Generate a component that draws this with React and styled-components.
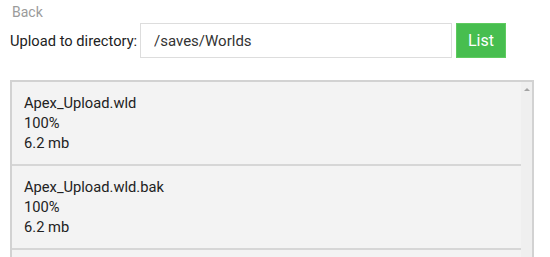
import styled, { createGlobalStyle } from 'styled-components';

const GlobalStyle = createGlobalStyle`
  html, body {
    margin: 0;
    background: #ffffff;
    overflow: hidden;
  }
  body {
    font-family: Roboto, "Liberation Sans", sans-serif;
    color: #222222;
  }
`;

const Page = styled.div`
  display: flex;
  flex-direction: column;
  padding: 2px 16px 0 10px;
`;

const BackLink = styled.a`
  font-size: 14px;
  line-height: 20px;
  color: #9b9b9b;
  padding-left: 2px;
  cursor: pointer;
`;

const UploadRow = styled.div`
  display: flex;
  align-items: center;
  gap: 4px;
  margin-top: 1px;
  height: 35px;
`;

const Label = styled.label`
  flex: none;
  width: 126px;
  white-space: nowrap;
  font-size: 14.7px;
  color: #222222;
`;

const PathInput = styled.input`
  box-sizing: border-box;
  width: 312px;
  height: 35px;
  border: 1px solid #dddddd;
  padding: 0 13px;
  font-family: inherit;
  font-size: 15px;
  color: #333333;
  outline: none;
`;

const ListButton = styled.button`
  box-sizing: border-box;
  width: 50px;
  height: 35px;
  border: 1px solid #5fcb5f;
  background: #47be4f;
  color: #ffffff;
  font-family: inherit;
  font-size: 16px;
  cursor: pointer;
`;

const FileBox = styled.div`
  display: flex;
  margin-top: 22px;
  height: 260px;
  border: 2px solid #d2d2d2;
  background: #f3f3f3;
`;

const FileList = styled.div`
  flex: 1;
  overflow: hidden;
`;

const FileItem = styled.div`
  padding: 11px 12px;
  border-bottom: 2px solid #d6d6d6;
  font-size: 14.7px;
  line-height: 20px;
  color: #222222;
`;

const ScrollTrack = styled.div`
  width: 11px;
  background: #efefef;
  display: flex;
  justify-content: center;
  padding-top: 6px;
`;

const ScrollArrow = styled.div`
  width: 0;
  height: 0;
  border-left: 3px solid transparent;
  border-right: 3px solid transparent;
  border-bottom: 3px solid #a3a3a3;
`;

const files = [
  { name: 'Apex_Upload.wld', progress: '100%', size: '6.2 mb' },
  { name: 'Apex_Upload.wld.bak', progress: '100%', size: '6.2 mb' },
];

export default function App() {
  return (
    <>
      <GlobalStyle />
      <Page>
        <BackLink>Back</BackLink>
        <UploadRow>
          <Label>Upload to directory:</Label>
          <PathInput defaultValue="/saves/Worlds" />
          <ListButton>List</ListButton>
        </UploadRow>
        <FileBox>
          <FileList>
            {files.map((f) => (
              <FileItem key={f.name}>
                <div>{f.name}</div>
                <div>{f.progress}</div>
                <div>{f.size}</div>
              </FileItem>
            ))}
          </FileList>
          <ScrollTrack>
            <ScrollArrow />
          </ScrollTrack>
        </FileBox>
      </Page>
    </>
  );
}
